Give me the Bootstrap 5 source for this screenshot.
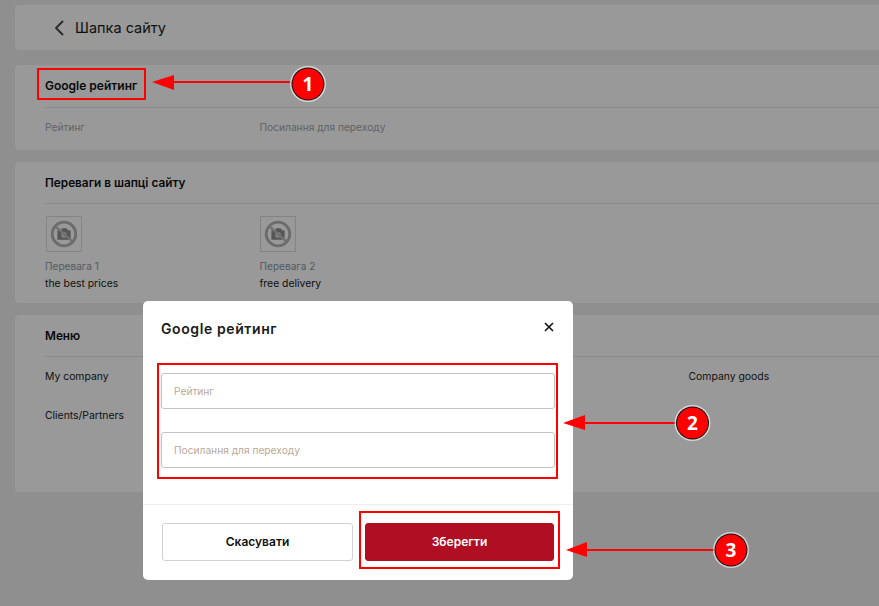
<!DOCTYPE html>
<html lang="uk"><head><meta charset="utf-8">
<link href="https://cdn.jsdelivr.net/npm/bootstrap@5.3.0/dist/css/bootstrap.min.css" rel="stylesheet">
<style>
html,body{height:606px;overflow:hidden}
body{background:#eeeeee;font-family:Inter,"Noto Sans",sans-serif;color:#1a1a1a;font-size:10.4px;position:relative}
.pg{padding:5px 0 0 15px;width:900px}
.sect{background:#fff;border-radius:4px;padding:0 0 0 30px}
.hd-top{height:45px;margin-bottom:15px;padding-left:38px;font-size:14.5px;gap:10px}
.sec-a{height:85px;margin-bottom:12px}
.sec-b{height:141px;margin-bottom:12px}
.sec-c{height:177px}
.sec-title{font-size:11.8px;font-weight:600;color:#111;border-bottom:1px solid #e4e4e4}
.sec-a .sec-title{height:43px;padding-top:12px;font-size:12px}
.sec-b .sec-title,.sec-c .sec-title{height:42px;padding-top:13px}
.col3{width:214.5px;flex:none}
.muted-t{color:#a2a5aa;font-size:10.2px}
.perk-l{color:#8b97a6;margin-top:5px;line-height:18px;font-size:10.1px}
.perk-v{line-height:18px}
.ph{width:36px;height:36px;border:1px solid #ddd;display:block;margin-left:1px}
.ph-next{margin-left:0}
.backdrop-x{position:absolute;inset:0;background:rgba(0,0,0,.4)}
.dlg{position:absolute;left:143px;top:301px;width:430px;height:279px;border:0;border-radius:5px;background:#fff}
.dlg-title{font-size:14px;font-weight:600;letter-spacing:.6px;margin:0;color:#1a1a1a}
.dlg .modal-header{border:0;padding:20px 18px 0 18px;height:72px;align-items:flex-start}
.dlg .modal-body{padding:0 18px;height:132px;border-bottom:1px solid #eeeeee;flex:none}
.dlg .form-control{height:36px;font-size:10.2px;border:1px solid #c4c4c4;border-radius:3px;padding:0 12px;margin-bottom:23px}
.dlg .form-control::placeholder{color:#bba894;opacity:1}
.x-btn{background:none;border:0;padding:0;margin:0;line-height:0}
.dlg .modal-footer{border:0;padding:18px 19px 0;gap:12px;flex-wrap:nowrap;justify-content:flex-start;align-items:flex-start}
.dlg .modal-footer .btn{margin:0;height:38px;font-size:12px;font-weight:600;border-radius:3px;padding:0}
.btn-no{width:191px;background:#fff;border:1px solid #d2d2d2;color:#111}
.btn-yes{width:189px;background:#b00e23;border:1px solid #b00e23;color:#fff}
.notes{position:absolute;left:0;top:0;width:879px;height:606px;pointer-events:none}
.notes text{font-family:"Open Sans",sans-serif;font-weight:700;font-size:19px;fill:#fff;text-anchor:middle}
</style></head>
<body>
<div class="pg">
 <div class="sect hd-top d-flex align-items-center">
  <svg width="12" height="18" viewBox="0 0 12 18"><path d="M10 2 3 9l7 7" fill="none" stroke="#444" stroke-width="1.8"/></svg>
  <span>Шапка сайту</span>
 </div>
 <div class="sect sec-a">
  <div class="sec-title">Google рейтинг</div>
  <div class="d-flex muted-t" style="padding-top:12px">
   <div class="col3">Рейтинг</div><div class="col3">Посилання для переходу</div>
  </div>
 </div>
 <div class="sect sec-b">
  <div class="sec-title">Переваги в шапці сайту</div>
  <div class="d-flex" style="padding-top:12px">
   <div class="col3">
    <svg class="ph" viewBox="0 0 36 36"><circle cx="18" cy="18" r="12.5" fill="none" stroke="#b5b5b5" stroke-width="3"/><path d="M11 14h4l1-2h5l1 2h3v10H11z" fill="#8f8f8f"/><circle cx="18" cy="19" r="3" fill="#d5d5d5"/><path d="m9 10 18 16" stroke="#bdbdbd" stroke-width="2.5"/></svg>
    <div class="perk-l">Перевага 1</div><div class="perk-v">the best prices</div>
   </div>
   <div class="col3">
    <svg class="ph ph-next" viewBox="0 0 36 36"><circle cx="18" cy="18" r="12.5" fill="none" stroke="#b5b5b5" stroke-width="3"/><path d="M11 14h4l1-2h5l1 2h3v10H11z" fill="#8f8f8f"/><circle cx="18" cy="19" r="3" fill="#d5d5d5"/><path d="m9 10 18 16" stroke="#bdbdbd" stroke-width="2.5"/></svg>
    <div class="perk-l">Перевага 2</div><div class="perk-v">free delivery</div>
   </div>
  </div>
 </div>
 <div class="sect sec-c">
  <div class="sec-title">Меню</div>
  <div class="d-flex" style="padding-top:12px;height:51px">
   <div class="col3">My company</div><div class="col3"></div><div class="col3"></div><div class="col3">Company goods</div>
  </div>
  <div>Clients/Partners</div>
 </div>
</div>
<div class="backdrop-x"></div>
<div class="modal-content dlg">
 <div class="modal-header justify-content-between">
  <h5 class="dlg-title">Google рейтинг</h5>
  <button class="x-btn" type="button" aria-label="Close"><svg width="12" height="12" viewBox="0 0 12 12"><path d="m2 2 8 8M10 2l-8 8" stroke="#111" stroke-width="1.6"/></svg></button>
 </div>
 <div class="modal-body">
  <input class="form-control" placeholder="Рейтинг">
  <input class="form-control" placeholder="Посилання для переходу">
 </div>
 <div class="modal-footer">
  <button class="btn btn-no" type="button">Скасувати</button>
  <button class="btn btn-yes" type="button">Зберегти</button>
 </div>
</div>
<svg class="notes" viewBox="0 0 879 606">
 <g fill="none" stroke="#f00" stroke-width="2">
  <rect x="38" y="69" width="107" height="30"/>
  <rect x="158" y="364" width="399" height="114"/>
  <rect x="360" y="512" width="199" height="56"/>
 </g>
 <g stroke="#f00" stroke-width="2" fill="#f00">
  <path d="M172 82h118M584 423h91M586 550h128" fill="none"/>
  <path stroke="none" d="m152 82 22-7v15zM563 423l22-8v15zM566 550l21-8v15z"/>
 </g>
 <g>
  <g><circle cx="308" cy="84" r="18" fill="#fff" fill-opacity=".6"/><circle cx="308" cy="84" r="16.5" fill="#111"/><circle cx="308" cy="84" r="15.5" fill="#f00"/><text x="308" y="91">1</text></g>
  <g><circle cx="692.5" cy="423" r="18" fill="#fff" fill-opacity=".6"/><circle cx="692.5" cy="423" r="16.5" fill="#111"/><circle cx="692.5" cy="423" r="15.5" fill="#f00"/><text x="692.5" y="430">2</text></g>
  <g><circle cx="731" cy="550" r="18" fill="#fff" fill-opacity=".6"/><circle cx="731" cy="550" r="16.5" fill="#111"/><circle cx="731" cy="550" r="15.5" fill="#f00"/><text x="731" y="557">3</text></g>
 </g>
</svg>
<script src="https://cdn.jsdelivr.net/npm/bootstrap@5.3.0/dist/js/bootstrap.bundle.min.js"></script>
</body></html>
